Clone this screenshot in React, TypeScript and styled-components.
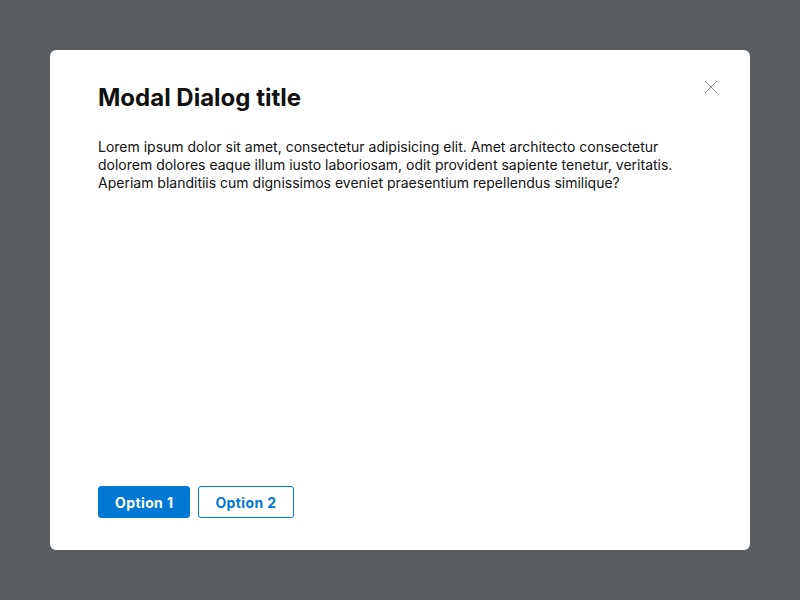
import React from "react";
import styled, { createGlobalStyle } from "styled-components";

const Global = createGlobalStyle`
  html, body { margin: 0; padding: 0; }
  body { background: #5b5e61; font-family: Inter, "Noto Sans", sans-serif; }
`;

const Backdrop = styled.div`
  width: 800px;
  height: 600px;
  display: flex;
  align-items: center;
  justify-content: center;
  background: #5b5e61;
`;

const Modal = styled.div`
  position: relative;
  box-sizing: border-box;
  width: 700px;
  height: 500px;
  background: #ffffff;
  border-radius: 6px;
  padding: 32px 48px 32px 48px;
  display: flex;
  flex-direction: column;
`;

const Title = styled.h2`
  margin: 0;
  font-size: 24px;
  line-height: 32px;
  font-weight: 700;
  color: #111111;
`;

const Body = styled.p`
  margin: 24px 0 0;
  font-size: 14px;
  line-height: 18px;
  color: #111111;
  flex: 1;
`;

const Actions = styled.div`
  display: flex;
  gap: 8px;
`;

const Button = styled.button<{ $primary?: boolean }>`
  box-sizing: border-box;
  height: 32px;
  padding: 0 16px;
  border-radius: 3px;
  font-family: Inter, sans-serif;
  font-size: 14px;
  font-weight: 700;
  letter-spacing: 0.4px;
  border: 1px solid #0078d4;
  background: ${(p) => (p.$primary ? "#0078d4" : "#ffffff")};
  color: ${(p) => (p.$primary ? "#ffffff" : "#0078d4")};
`;

const Close = styled.button`
  position: absolute;
  top: 28px;
  right: 30px;
  width: 18px;
  height: 18px;
  padding: 0;
  border: none;
  background: transparent;
  display: flex;
  align-items: center;
  justify-content: center;
`;

export default function App() {
  return (
    <>
      <Global />
      <Backdrop>
        <Modal>
          <Close aria-label="Close">
            <svg width="14" height="14" viewBox="0 0 14 14">
              <path d="M1 1L13 13M13 1L1 13" stroke="#8a8aa6" strokeWidth="1" />
            </svg>
          </Close>
          <Title>Modal Dialog title</Title>
          <Body>
            Lorem ipsum dolor sit amet, consectetur adipisicing elit. Amet architecto consectetur
            dolorem dolores eaque illum iusto laboriosam, odit provident sapiente tenetur, veritatis.
            Aperiam blanditiis cum dignissimos eveniet praesentium repellendus similique?
          </Body>
          <Actions>
            <Button $primary>Option 1</Button>
            <Button>Option 2</Button>
          </Actions>
        </Modal>
      </Backdrop>
    </>
  );
}
